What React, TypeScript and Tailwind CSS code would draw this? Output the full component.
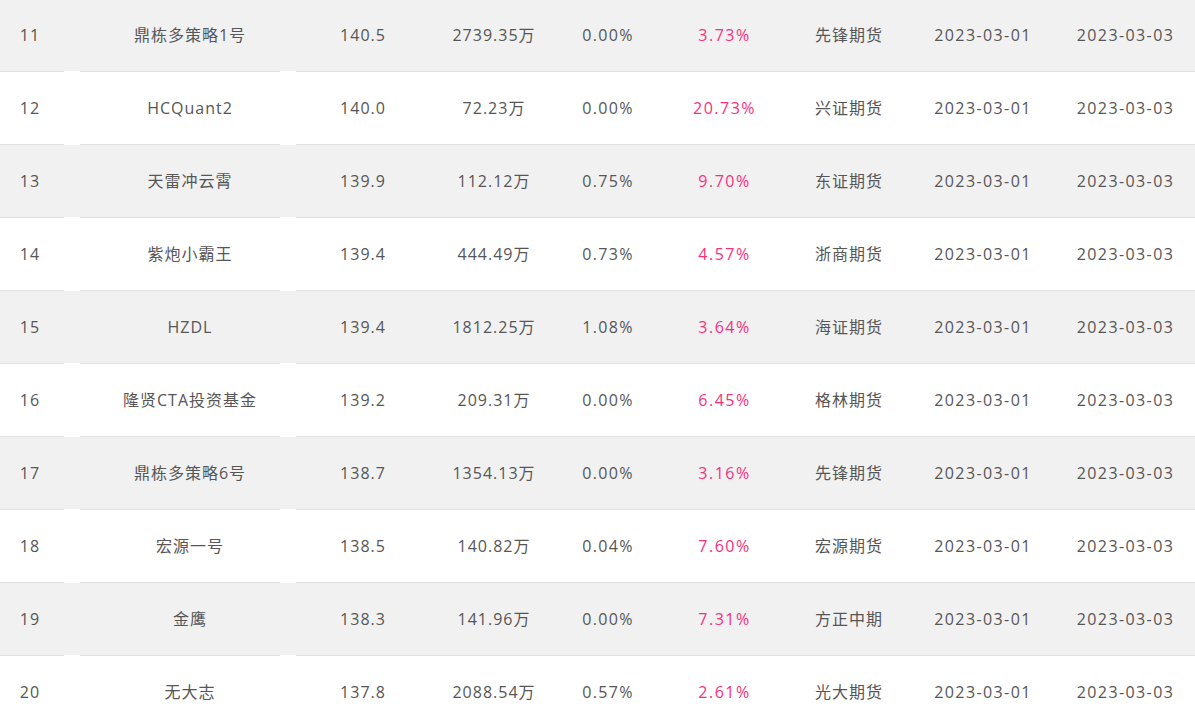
import React from "react";

type Row = {
  rank: string;
  name: string;
  score: string;
  scale: string;
  dd: string;
  ret: string;
  broker: string;
  start: string;
  end: string;
};

const rows: Row[] = [
  { rank: "11", name: "鼎栋多策略1号", score: "140.5", scale: "2739.35万", dd: "0.00%", ret: "3.73%", broker: "先锋期货", start: "2023-03-01", end: "2023-03-03" },
  { rank: "12", name: "HCQuant2", score: "140.0", scale: "72.23万", dd: "0.00%", ret: "20.73%", broker: "兴证期货", start: "2023-03-01", end: "2023-03-03" },
  { rank: "13", name: "天雷冲云霄", score: "139.9", scale: "112.12万", dd: "0.75%", ret: "9.70%", broker: "东证期货", start: "2023-03-01", end: "2023-03-03" },
  { rank: "14", name: "紫炮小霸王", score: "139.4", scale: "444.49万", dd: "0.73%", ret: "4.57%", broker: "浙商期货", start: "2023-03-01", end: "2023-03-03" },
  { rank: "15", name: "HZDL", score: "139.4", scale: "1812.25万", dd: "1.08%", ret: "3.64%", broker: "海证期货", start: "2023-03-01", end: "2023-03-03" },
  { rank: "16", name: "隆贤CTA投资基金", score: "139.2", scale: "209.31万", dd: "0.00%", ret: "6.45%", broker: "格林期货", start: "2023-03-01", end: "2023-03-03" },
  { rank: "17", name: "鼎栋多策略6号", score: "138.7", scale: "1354.13万", dd: "0.00%", ret: "3.16%", broker: "先锋期货", start: "2023-03-01", end: "2023-03-03" },
  { rank: "18", name: "宏源一号", score: "138.5", scale: "140.82万", dd: "0.04%", ret: "7.60%", broker: "宏源期货", start: "2023-03-01", end: "2023-03-03" },
  { rank: "19", name: "金鹰", score: "138.3", scale: "141.96万", dd: "0.00%", ret: "7.31%", broker: "方正中期", start: "2023-03-01", end: "2023-03-03" },
  { rank: "20", name: "无大志", score: "137.8", scale: "2088.54万", dd: "0.57%", ret: "2.61%", broker: "光大期货", start: "2023-03-01", end: "2023-03-03" },
];

function TableRow({ r, white }: { r: Row; white: boolean }) {
  const bg = white ? "bg-white" : "bg-[#f1f1f1]";
  const line = white ? "border-y border-[#e1e1e4]" : "";
  const h = white ? "h-[74px]" : "h-[72px]";
  const cell = `flex items-center justify-center whitespace-nowrap ${line}`;
  return (
    <div className={`flex ${h} ${bg}`}>
      <div className={`${cell} w-[64px] pr-[4px]`}>{r.rank}</div>
      <div className="w-[16px]" />
      <div className={`${cell} w-[200px] pl-[20px]`}>{r.name}</div>
      <div className="w-[16px]" />
      <div className={`${cell} w-[134px]`}>{r.score}</div>
      <div className={`${cell} w-[128px]`}>{r.scale}</div>
      <div className={`${cell} w-[100px] tracking-[1.3px]`}>{r.dd}</div>
      <div className={`${cell} w-[130px] pl-[3px] text-[#f7307d] tracking-[1.5px]`}>{r.ret}</div>
      <div className={`${cell} w-[122px]`}>{r.broker}</div>
      <div className={`${cell} w-[146px] tracking-[1.4px]`}>{r.start}</div>
      <div className={`${cell} flex-1 tracking-[1.4px]`}>{r.end}</div>
    </div>
  );
}

export default function App() {
  return (
    <div
      className="w-[1195px] h-[724px] overflow-hidden bg-white text-[16px] text-[#565656] tracking-[1px]"
      style={{ fontFamily: '"Open Sans", "Noto Sans CJK SC", sans-serif' }}
    >
      <div className="-mt-px">
        {rows.map((r, i) => (
          <TableRow key={r.rank} r={r} white={i % 2 === 1} />
        ))}
      </div>
    </div>
  );
}
